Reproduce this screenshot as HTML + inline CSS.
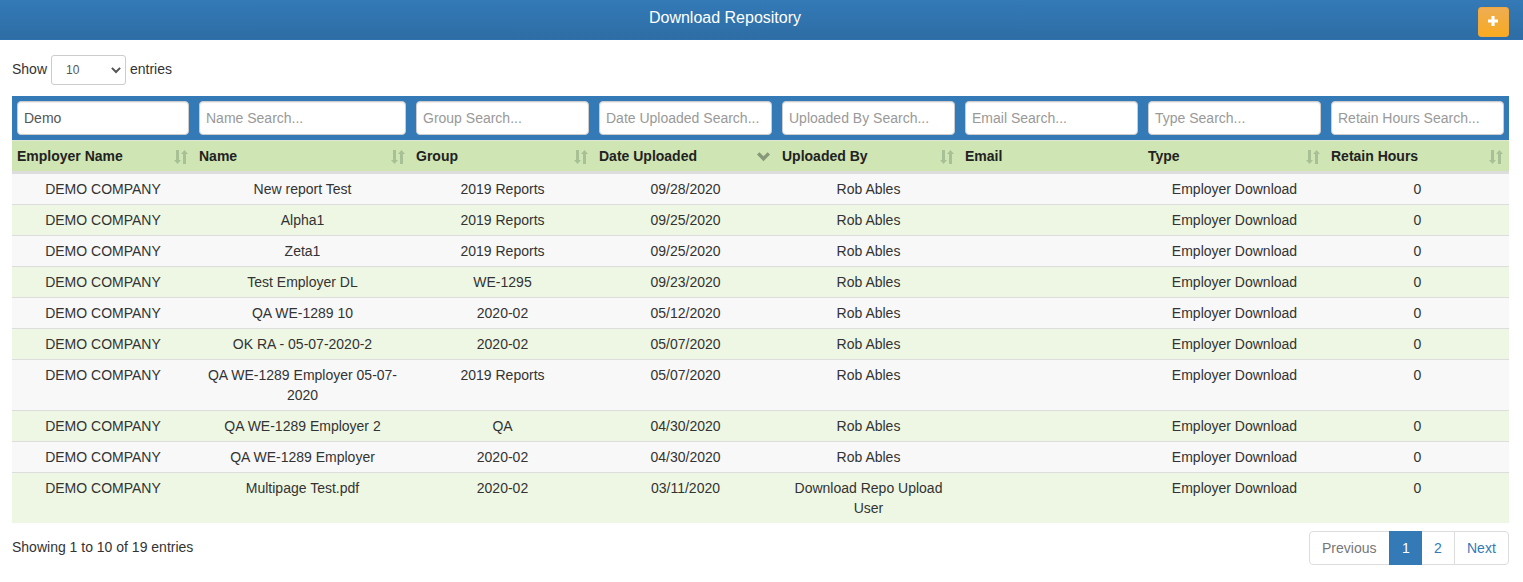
<!DOCTYPE html>
<html><head><meta charset="utf-8"><title>Download Repository</title>
<style>
*{box-sizing:border-box;margin:0;padding:0}
html,body{width:1523px;height:582px;overflow:hidden;background:#fff}
body{font-family:"Liberation Sans",sans-serif;font-size:14px;line-height:20px;color:#333;position:relative}
.top{position:absolute;left:0;top:0;width:1523px;height:40px;background:linear-gradient(to bottom,#337ab7 0,#2e6da4 100%);border-bottom:1px solid #2f70b2}
.top .title{position:absolute;left:0;top:8px;width:1450px;text-align:center;color:#fff;font-size:16px;line-height:20px}
.plus{position:absolute;left:1478px;top:7px;width:31px;height:30px;border-radius:3px;background:linear-gradient(to bottom,#eead52 0,#f8aa20 100%);border:1px solid #f0a83a}
.plus svg{position:absolute;left:9px;top:8px}
.len{position:absolute;left:12px;top:59px;font-size:14px}
.sel{position:absolute;left:51px;top:55px;width:75px;height:30px;border:1px solid #ccc;border-radius:3px;background:#fff;font-size:12px;line-height:28px;padding-left:14px;color:#555}
.sel svg{position:absolute;left:59px;top:11px}
.ent{position:absolute;left:130px;top:59px}
table{position:absolute;left:12px;top:96px;width:1497px;border-collapse:separate;border-spacing:0;table-layout:fixed}
.frow td{background:#337ab7;padding:5px;height:44px}
.frow .inp{height:34px;background:#fff;border:1px solid #ccc;border-radius:4px;box-shadow:inset 0 1px 1px rgba(0,0,0,.075);font-size:14px;color:#999;padding-left:6px;line-height:32px;white-space:nowrap;overflow:hidden}
.frow .inp.v{color:#555}
.hrow th{background:#cfe5b3;text-align:left;font-weight:bold;padding:5px 5px 5px 5px;height:34px;line-height:20px;vertical-align:top;border-top:1px solid #dde6d6;border-bottom:3px solid #ddd;position:relative;color:#222}
.si{position:absolute;right:6px;top:9px}
.si.dn{right:7px;top:11px}
tbody td{text-align:center;padding:5px 5px;vertical-align:top;border-top:1px solid #ddd}
tbody tr.o td{background:#f8f8f8}
tbody tr.e td{background:#eef7e3}
tbody tr.first td{border-top:0}
.info{position:absolute;left:12px;top:537px}
.pag{position:absolute;left:1309px;top:531px;height:34px;display:flex}
.pag div{border:1px solid #ddd;margin-left:-1px;padding:6px 12px;line-height:20px;color:#337ab7;background:#fff;height:34px}
.pag div.dis{color:#777;border-radius:4px 0 0 4px;margin-left:0}
.pag div.act{background:#337ab7;border-color:#337ab7;color:#fff;z-index:2}
.pag div.last{border-radius:0 4px 4px 0}
</style></head><body>
<div class="top"><div class="title">Download Repository</div></div>
<div class="plus"><svg width="10" height="10" viewBox="0 0 10 10"><path d="M0 3.4H10V6.6H0Z M3.4 0H6.6V10H3.4Z" fill="#fff"/></svg></div>
<div class="len">Show</div>
<div class="sel">10<svg width="10" height="7" viewBox="0 0 10 7"><path d="M0.9 0.9L5 5L9.1 0.9" stroke="#555" stroke-width="2" fill="none"/></svg></div>
<div class="ent">entries</div>
<table>
<colgroup>
<col style="width:182px">
<col style="width:217px">
<col style="width:183px">
<col style="width:183px">
<col style="width:183px">
<col style="width:183px">
<col style="width:183px">
<col style="width:183px">
</colgroup>
<thead><tr class="frow">
<td><div class="inp v">Demo</div></td>
<td><div class="inp">Name Search...</div></td>
<td><div class="inp">Group Search...</div></td>
<td><div class="inp">Date Uploaded Search...</div></td>
<td><div class="inp">Uploaded By Search...</div></td>
<td><div class="inp">Email Search...</div></td>
<td><div class="inp">Type Search...</div></td>
<td><div class="inp">Retain Hours Search...</div></td>
</tr>
<tr class="hrow">
<th>Employer Name<svg class="si" width="14" height="14" viewBox="0 0 14 14"><path d="M2 0H5V10H7L3.5 14L0 10H2Z M9 14V4H7L10.5 0L14 4H12V14Z" fill="#a8c096"/></svg></th>
<th>Name<svg class="si" width="14" height="14" viewBox="0 0 14 14"><path d="M2 0H5V10H7L3.5 14L0 10H2Z M9 14V4H7L10.5 0L14 4H12V14Z" fill="#a8c096"/></svg></th>
<th>Group<svg class="si" width="14" height="14" viewBox="0 0 14 14"><path d="M2 0H5V10H7L3.5 14L0 10H2Z M9 14V4H7L10.5 0L14 4H12V14Z" fill="#a8c096"/></svg></th>
<th>Date Uploaded<svg class="si dn" width="13" height="10" viewBox="0 0 13 10"><path d="M0 2.6L2.4 0.2L6.5 4.3L10.6 0.2L13 2.6L6.5 9.2Z" fill="#87977a"/></svg></th>
<th>Uploaded By<svg class="si" width="14" height="14" viewBox="0 0 14 14"><path d="M2 0H5V10H7L3.5 14L0 10H2Z M9 14V4H7L10.5 0L14 4H12V14Z" fill="#a8c096"/></svg></th>
<th>Email</th>
<th>Type<svg class="si" width="14" height="14" viewBox="0 0 14 14"><path d="M2 0H5V10H7L3.5 14L0 10H2Z M9 14V4H7L10.5 0L14 4H12V14Z" fill="#a8c096"/></svg></th>
<th>Retain Hours<svg class="si" width="14" height="14" viewBox="0 0 14 14"><path d="M2 0H5V10H7L3.5 14L0 10H2Z M9 14V4H7L10.5 0L14 4H12V14Z" fill="#a8c096"/></svg></th>
</tr></thead>
<tbody>
<tr class="o first"><td>DEMO COMPANY</td><td>New report Test</td><td>2019 Reports</td><td>09/28/2020</td><td>Rob Ables</td><td></td><td>Employer Download</td><td>0</td></tr>
<tr class="e"><td>DEMO COMPANY</td><td>Alpha1</td><td>2019 Reports</td><td>09/25/2020</td><td>Rob Ables</td><td></td><td>Employer Download</td><td>0</td></tr>
<tr class="o"><td>DEMO COMPANY</td><td>Zeta1</td><td>2019 Reports</td><td>09/25/2020</td><td>Rob Ables</td><td></td><td>Employer Download</td><td>0</td></tr>
<tr class="e"><td>DEMO COMPANY</td><td>Test Employer DL</td><td>WE-1295</td><td>09/23/2020</td><td>Rob Ables</td><td></td><td>Employer Download</td><td>0</td></tr>
<tr class="o"><td>DEMO COMPANY</td><td>QA WE-1289 10</td><td>2020-02</td><td>05/12/2020</td><td>Rob Ables</td><td></td><td>Employer Download</td><td>0</td></tr>
<tr class="e"><td>DEMO COMPANY</td><td>OK RA - 05-07-2020-2</td><td>2020-02</td><td>05/07/2020</td><td>Rob Ables</td><td></td><td>Employer Download</td><td>0</td></tr>
<tr class="o"><td>DEMO COMPANY</td><td>QA WE-1289 Employer 05-07-2020</td><td>2019 Reports</td><td>05/07/2020</td><td>Rob Ables</td><td></td><td>Employer Download</td><td>0</td></tr>
<tr class="e"><td>DEMO COMPANY</td><td>QA WE-1289 Employer 2</td><td>QA</td><td>04/30/2020</td><td>Rob Ables</td><td></td><td>Employer Download</td><td>0</td></tr>
<tr class="o"><td>DEMO COMPANY</td><td>QA WE-1289 Employer</td><td>2020-02</td><td>04/30/2020</td><td>Rob Ables</td><td></td><td>Employer Download</td><td>0</td></tr>
<tr class="e"><td>DEMO COMPANY</td><td>Multipage Test.pdf</td><td>2020-02</td><td>03/11/2020</td><td>Download Repo Upload User</td><td></td><td>Employer Download</td><td>0</td></tr>
</tbody></table>
<div class="info">Showing 1 to 10 of 19 entries</div>
<div class="pag"><div class="dis" style="width:81px">Previous</div><div class="act" style="width:33px">1</div><div style="width:34px">2</div><div class="last" style="width:55px">Next</div></div>
</body></html>
